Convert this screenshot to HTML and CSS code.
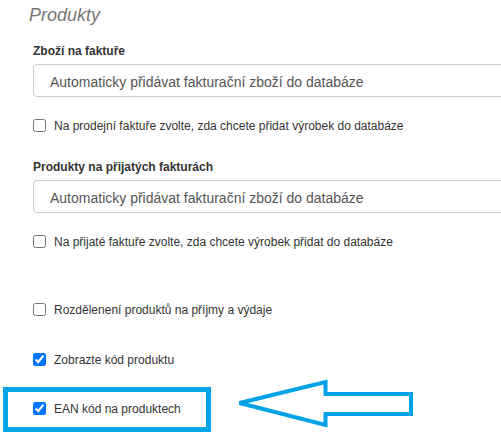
FILE: index.html
```html
<!DOCTYPE html>
<html lang="cs">
<head>
<meta charset="utf-8">
<title>Produkty</title>
<link rel="stylesheet" href="styles.css">
</head>
<body>
<div class="page">
  <h3 class="title">Produkty</h3>

  <div class="field-label first">Zboží na faktuře</div>
  <div class="select">Automaticky přidávat fakturační zboží do databáze</div>
  <label class="check row1"><input type="checkbox"><span>Na prodejní faktuře zvolte, zda chcete přidat výrobek do databáze</span></label>

  <div class="field-label second">Produkty na přijatých fakturách</div>
  <div class="select">Automaticky přidávat fakturační zboží do databáze</div>
  <label class="check row2"><input type="checkbox"><span>Na přijaté faktuře zvolte, zda chcete výrobek přidat do databáze</span></label>

  <label class="check row3"><input type="checkbox"><span>Rozdělenení produktů na příjmy a výdaje</span></label>
  <label class="check row4"><input type="checkbox" checked><span>Zobrazte kód produktu</span></label>

  <div class="highlight">
    <label class="check"><input type="checkbox" checked><span>EAN kód na produktech</span></label>
  </div>

  <svg class="arrow" width="190" height="60" viewBox="0 0 190 60" aria-hidden="true">
    <polygon points="9.5,31 95.5,10 95.5,22 181,22 181,42 95.5,42 95.5,53" fill="none" stroke="#00a2e8" stroke-width="4" stroke-linejoin="miter"/>
  </svg>
</div>
</body>
</html>
```
FILE: styles.css
```css
html, body {
  margin: 0;
  padding: 0;
  background: #fff;
  overflow: hidden;
}
body {
  font-family: "Liberation Sans", Arial, sans-serif;
  color: #333;
}
.page {
  position: relative;
  width: 501px;
  height: 446px;
  overflow: hidden;
  padding-left: 33px;
  box-sizing: border-box;
}
.title {
  margin: 4px 0 0 -4px;
  font-size: 18px;
  line-height: 22px;
  font-style: italic;
  font-weight: normal;
  color: #777;
}
.field-label {
  font-size: 12px;
  line-height: 18px;
  font-weight: bold;
  color: #333;
}
.field-label.first { margin-top: 16px; }
.field-label.second { margin-top: 23px; }
.select {
  margin-top: 4px;
  width: 520px;
  height: 33px;
  box-sizing: border-box;
  border: 1px solid #ccc;
  border-radius: 4px;
  padding: 5px 0 0 16px;
  font-size: 14px;
  line-height: 25px;
  color: #555;
  white-space: nowrap;
}
.check {
  display: flex;
  align-items: center;
  height: 20px;
  font-size: 12px;
  color: #333;
  white-space: nowrap;
}
.check input {
  margin: 0;
  width: 13px;
  height: 13px;
}
.check span {
  margin-left: 8px;
  padding-top: 1px;
}
.row1 { margin-top: 18px; }
.row2 { margin-top: 18px; }
.row3 { margin-top: 48px; }
.row4 { margin-top: 30px; }
.highlight {
  margin: 18px 0 0 -30px;
  width: 208px;
  box-sizing: border-box;
  border: 5px solid #00a2e8;
  padding: 6px 0 9px 25px;
}
.arrow {
  position: absolute;
  left: 230px;
  top: 372px;
}
```
